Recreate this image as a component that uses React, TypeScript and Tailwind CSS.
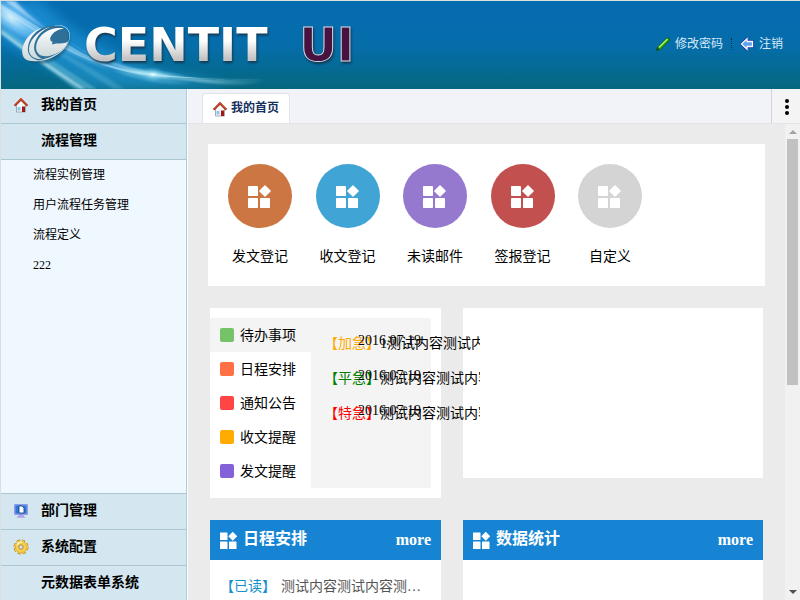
import type { ReactNode } from 'react';

const shortcuts = [
  { label: '发文登记', color: 'bg-[#cc7743]' },
  { label: '收文登记', color: 'bg-[#40a4d4]' },
  { label: '未读邮件', color: 'bg-[#9579cf]' },
  { label: '签报登记', color: 'bg-[#c2504f]' },
  { label: '自定义', color: 'bg-[#d4d4d4]' },
];

const categories = [
  { label: '待办事项', color: 'bg-[#76c269]', active: true },
  { label: '日程安排', color: 'bg-[#ff7145]', active: false },
  { label: '通知公告', color: 'bg-[#ff4644]', active: false },
  { label: '收文提醒', color: 'bg-[#ffab00]', active: false },
  { label: '发文提醒', color: 'bg-[#8561d9]', active: false },
];

const todos = [
  { tag: '【加急】', color: 'text-[#ffab00]', text: '1测试内容测试内容' },
  { tag: '【平急】', color: 'text-[#008000]', text: '测试内容测试内容' },
  { tag: '【特急】', color: 'text-[#ff0000]', text: '测试内容测试内容' },
];

function WidgetIcon({ className }: { className: string }) {
  return (
    <svg viewBox="1 0 24 24" className={className} fill="currentColor" aria-hidden="true">
      <rect x="1" y="2" width="10" height="10" rx="0.8" />
      <rect x="1" y="14" width="10" height="10" rx="0.8" />
      <rect x="13" y="14" width="10" height="10" rx="0.8" />
      <path d="M18 1l5.600 5.600a.6.6 0 0 1 0 .8L18 13l-5.600-5.600a.6.6 0 0 1 0-.8z" />
    </svg>
  );
}

function HomeIcon() {
  return (
    <svg viewBox="0 0 16 16" className="size-4 shrink-0" aria-hidden="true">
      <path d="M3.500 8L8 3.500 12.500 8v7h-9z" fill="#f6f6f6" stroke="#8f9aa2" strokeWidth=".8" />
      <path d="M1.600 8.800L8 2.200l6.400 6.600" fill="none" stroke="#a8341e" strokeWidth="2" />
      <path d="M2 7.800L8 1.800l6 6" fill="none" stroke="#e2492c" strokeWidth="1" />
      <rect x="9" y="9.500" width="3" height="5.500" fill="#a01818" />
      <rect x="4.500" y="10" width="3" height="3.500" fill="#8cc8f0" />
    </svg>
  );
}

function MonitorIcon() {
  return (
    <svg viewBox="0 0 16 16" className="size-4 shrink-0" aria-hidden="true">
      <rect x="1" y="1" width="14" height="11" rx="1" fill="#8f9be8" />
      <rect x="2.500" y="2.500" width="11" height="8" fill="#2a78d8" />
      <path d="M6 3h3l2 2v5H6z" fill="#fff" stroke="#123a78" strokeWidth=".8" />
      <path d="M6 12h4l2.500 2.800h-9z" fill="#a9a4e6" />
    </svg>
  );
}

function GearIcon() {
  return (
    <svg viewBox="0 0 16 16" className="size-4 shrink-0" aria-hidden="true">
      <circle cx="8" cy="8" r="6.200" fill="none" stroke="#a87a20" strokeWidth="2.600" strokeDasharray="3 1.870" />
      <circle cx="8" cy="8" r="5.800" fill="#f8cf48" stroke="#c79224" strokeWidth=".6" />
      <circle cx="8" cy="8" r="6.200" fill="none" stroke="#f6c83c" strokeWidth="1.600" strokeDasharray="2.600 2.270" />
      <path d="M4 6a5 5 0 0 1 5-3" fill="none" stroke="#fff3b8" strokeWidth="1.400" />
      <circle cx="8" cy="8" r="2.200" fill="#d4e7f0" stroke="#a8884a" strokeWidth="1" />
    </svg>
  );
}

function HeaderArt() {
  return (
    <svg viewBox="0 0 400 88" className="absolute left-0 top-0 h-full w-100" aria-hidden="true">
      <defs>
        <filter id="soft" x="-20%" y="-20%" width="140%" height="140%">
          <feGaussianBlur stdDeviation="1.200" />
        </filter>
        <filter id="softer" x="-20%" y="-20%" width="140%" height="140%">
          <feGaussianBlur stdDeviation="6" />
        </filter>
        <radialGradient id="glow">
          <stop offset="0" stopColor="#f0faff" />
          <stop offset=".35" stopColor="#7cc8fa" stopOpacity=".85" />
          <stop offset="1" stopColor="#2c96e6" stopOpacity="0" />
        </radialGradient>
        <linearGradient id="beam" gradientUnits="userSpaceOnUse" x1="0" y1="0" x2="270" y2="0">
          <stop offset="0" stopColor="#d8f0ff" stopOpacity=".9" />
          <stop offset=".3" stopColor="#6cbcf0" stopOpacity=".5" />
          <stop offset=".58" stopColor="#e4fbff" />
          <stop offset="1" stopColor="#7cd0e6" stopOpacity="0" />
        </linearGradient>
        <linearGradient id="silver" x1="0" y1="0" x2="0" y2="1">
          <stop offset="0" stopColor="#ffffff" />
          <stop offset="1" stopColor="#ccd8da" />
        </linearGradient>
        <radialGradient id="flare">
          <stop offset="0" stopColor="#ffffff" />
          <stop offset=".25" stopColor="#a8e4f6" stopOpacity=".8" />
          <stop offset="1" stopColor="#50b8dc" stopOpacity="0" />
        </radialGradient>
      </defs>
      <path d="M0 0H40Q84 46 160 70L230 84 150 88H90L0 40z" fill="#2aa4ea" opacity=".5" filter="url(#softer)" />
      <ellipse cx="10" cy="17" rx="50" ry="20" fill="url(#glow)" transform="rotate(35 10 17)" />
      <g filter="url(#soft)">
        <path d="M0 26Q40 52 96 88H74Q34 58 0 34z" fill="#6cc4de" opacity=".5" />
        <path d="M0 29Q36 56 84 88H80Q32 58 0 32z" fill="#d4f4fa" opacity=".6" />
        <path d="M0 18Q54 44 124 88H112Q48 46 0 22z" fill="#7ccbe8" opacity=".25" />
        <path d="M0 10Q50 38 96 62T190 82Q130 78 90 62T0 14z" fill="#8ad4f0" opacity=".35" />
      </g>
      <path d="M14 0Q62 52 150 72T270 78Q200 80 148 74T4 0z" fill="url(#beam)" opacity=".85" filter="url(#soft)" />
      <path d="M0 3Q50 34 80 51T150 73Q106 68 76 54T0 8z" fill="#d4f0ff" opacity=".4" />
      <path d="M60 44Q104 70 170 75T260 78Q200 79 150 74.500T60 44z" fill="url(#beam)" />
      <ellipse cx="152" cy="73.500" rx="44" ry="6" fill="url(#flare)" transform="rotate(7 152 73)" />
      <ellipse cx="152" cy="73.500" rx="12" ry="8" fill="url(#flare)" opacity=".7" />
      <ellipse cx="46.500" cy="44.500" rx="24.500" ry="16" transform="rotate(-30 46.500 44.500)" fill="#0c3c58" opacity=".5" filter="url(#soft)" />
      <ellipse cx="45" cy="42.500" rx="24" ry="15.500" transform="rotate(-30 45 42.500)" fill="#2f7098" />
      <g fill="url(#silver)">
        <path d="M41 27C28 31 20 43 21.500 53C22.500 60 30 61 38 59.500C30 58 26 53 27 46C28 38 33 31 41 27z" />
        <path d="M50 25.500C38 29 29 38 28 47C27.500 55 33 58.500 41 58C35 55 32 50 33.500 43C35.500 35 41 29 50 25.500z" />
        <path d="M63 27.500C50 25 38 33 35.500 43C33.500 52 39 56.500 48 55C58 53 65 47 67 40.500C64 42.500 60 42.500 55 42.500L51 43.500L51.500 40.500C50 41 48.500 39 49.500 36C52 31.500 56 28.500 63 27.500z" />
        <path d="M49 25.500C59 22 68.500 26 68.500 35C68.500 47 52 59 31 60C47 62 67 51 69 36C69.500 25 59 21.500 49 25.500z" />
      </g>
    </svg>
  );
}

function MenuHeading({ icon, children, edge }: { icon?: ReactNode; children: string; edge: string }) {
  return (
    <button
      type="button"
      className={`flex h-9 w-full shrink-0 items-center gap-3 bg-[#d4e7f0] pb-0.5 pl-3 text-left text-sm font-bold ${edge}`}
    >
      <span className="size-4">{icon}</span>
      {children}
    </button>
  );
}

function PanelHeader({ title }: { title: string }) {
  return (
    <div className="flex h-10 items-center gap-[5px] bg-[#1784d3] px-[10px] text-base font-bold text-white">
      <WidgetIcon className="size-[18px]" />
      <h2 className="flex-1 pb-0.5">{title}</h2>
      <a href="#more">more</a>
    </div>
  );
}

export default function App() {
  return (
    <div className="flex h-screen flex-col overflow-hidden border-t border-l border-[#dcdfe0] bg-[#ebebeb] font-['Liberation_Serif','Noto_Sans_CJK_SC',serif] text-black">
      <header className="relative flex h-22 shrink-0 items-center justify-between bg-linear-to-b from-[#056bb0] via-[#066dab] via-50% to-[#07677f] pr-[17px]">
        <HeaderArt />
        <h1 className="relative flex items-center gap-8 pl-[83px] font-['DejaVu_Sans',sans-serif] text-[46px] leading-none font-bold drop-shadow-[1px_2px_1px_#123a55]">
          <span className="bg-linear-to-b from-white from-40% to-[#c4c4c4] to-80% bg-clip-text text-transparent">CENTIT</span>
          <span className="text-[#47123f] [-webkit-text-stroke:1px_#d5dde2]">UI</span>
        </h1>
        <nav className="relative flex items-center pb-0.5 text-xs text-[#d5eaf7]">
          <a href="#password" className="flex items-center gap-[5px]">
            <svg viewBox="0 0 14 14" className="size-[14px]" aria-hidden="true">
              <path d="M.5 13.500l1-3.500L10.500 1.200q1.500-1 2.600.2t0 2.600L4.500 12.500z" fill="#1c9a10" stroke="#0c5014" strokeWidth=".6" />
              <path d="M3 10.500L11.500 2" stroke="#b8f070" strokeWidth="1.600" />
              <path d="M.5 13.500l.7-2.500 1.900 1.600z" fill="#143c10" />
            </svg>
            修改密码
          </a>
          <span className="mx-2 h-3 border-l border-dotted border-[#0c3350]" />
          <a href="#logout" className="flex items-center gap-[5px]">
            <svg viewBox="0 0 14 14" className="size-[14px]" aria-hidden="true">
              <path d="M1 7l6-5.800V4h6v6H7v2.800z" fill="#5aa2ee" stroke="#1530a0" strokeWidth="1.800" strokeLinejoin="round" />
              <path d="M1.500 7L7 1.800V4.500h5.500v5H7v2.700z" fill="none" stroke="#fff" strokeWidth="1.300" />
            </svg>
            注销
          </a>
        </nav>
      </header>

      <div className="flex min-h-0 flex-1">
        <aside className="flex w-[186px] shrink-0 flex-col border-r border-[#a9cfd8] bg-[#f0f8ff]">
          <MenuHeading icon={<HomeIcon />} edge="-mt-px border-b border-[#abc8d1]">我的首页</MenuHeading>
          <MenuHeading edge="border-b border-[#abc8d1]">流程管理</MenuHeading>
          <ul className="flex-1 text-xs leading-[30px]">
            {['流程实例管理', '用户流程任务管理', '流程定义', '222'].map((item) => (
              <li key={item} className="pl-8">
                <a href="#menu">{item}</a>
              </li>
            ))}
          </ul>
          <MenuHeading icon={<MonitorIcon />} edge="border-t border-[#abc8d1]">部门管理</MenuHeading>
          <MenuHeading icon={<GearIcon />} edge="border-t border-[#abc8d1]">系统配置</MenuHeading>
          <MenuHeading edge="-mb-px border-t border-[#abc8d1]">元数据表单系统</MenuHeading>
        </aside>

        <div className="flex min-w-0 flex-1 flex-col border-l border-white">
          <div className="flex h-[35px] shrink-0 items-end border-b border-[#e1e2ea] bg-[#f2f3f9] pl-[14px]">
            <button
              type="button"
              className="flex h-[30px] items-center gap-[3px] rounded-t border border-b-0 border-[#e1e2ea] bg-white px-[9px] text-xs font-bold text-[#16305f]"
            >
              <HomeIcon />
              <span className="pr-px pb-0.5">我的首页</span>
            </button>
            <button
              type="button"
              aria-label="更多"
              className="ml-auto flex h-full w-[29px] flex-col items-center justify-center gap-[2px] border-l border-[#d3d3d3] bg-[#f4f4f4] pt-0.5 pl-0.5"
            >
              <span className="size-1 rounded-full bg-black" />
              <span className="size-1 rounded-full bg-black" />
              <span className="size-1 rounded-full bg-black" />
            </button>
          </div>

          <div className="flex min-h-0 flex-1">
            <main className="min-w-0 flex-1 overflow-hidden pt-5 text-sm">
              <section className="mx-5 h-[142px] bg-white p-5 whitespace-nowrap">
                {shortcuts.map((s) => (
                  <span key={s.label}>
                    <a href="#open" className="mr-5 inline-block w-16 text-center">
                      <span className={`flex size-16 items-center justify-center rounded-full text-white ${s.color}`}>
                        <WidgetIcon className="size-6" />
                      </span>
                      <span className="mt-[19px] block">{s.label}</span>
                    </a>{' '}
                  </span>
                ))}
              </section>

              <div className="mx-[22px] mt-[22px] grid grid-cols-[minmax(0,1fr)_300px] items-start gap-[22px]">
                <section className="relative flex bg-white py-[10px] pr-[10px]">
                  <ul className="w-[101px] shrink-0">
                    {categories.map((c) => (
                      <li key={c.label}>
                        <button
                          type="button"
                          className={`flex h-[34px] w-full items-center gap-[6px] pl-[10px] whitespace-nowrap ${c.active ? 'bg-[#f4f4f4]' : 'bg-white'}`}
                        >
                          <span className={`size-[14px] rounded-xs ${c.color}`} />
                          <span className="pt-0.5">{c.label}</span>
                        </button>
                      </li>
                    ))}
                  </ul>
                  <ul className="min-w-0 flex-1 bg-[#f4f4f4] px-[10px] py-2 leading-[35px]">
                    {todos.map((t) => (
                      <li key={t.tag} className="relative h-[35px] pl-[3px]">
                        <p className="w-[156px] overflow-hidden whitespace-nowrap">
                          <span className={t.color}>{t.tag}</span>
                          {t.text}
                        </p>
                        <time className="absolute -top-[3px] right-0">2016.07.19</time>
                      </li>
                    ))}
                  </ul>
                </section>
                <section className="h-[170px] bg-white" />

                <section className="h-[190px] bg-white">
                  <PanelHeader title="日程安排" />
                  <p className="flex px-[10px] pt-[17px] text-[#555555]">
                    <span className="mr-[5px] text-[#1590c8]">【已读】</span>
                    <span className="w-[140px] truncate">测试内容测试内容测试内容</span>
                  </p>
                </section>
                <section className="h-[190px] bg-white">
                  <PanelHeader title="数据统计" />
                </section>
              </div>
            </main>

            <div className="flex w-[15px] shrink-0 flex-col items-center bg-[#f1f1f1] py-[6px]" aria-hidden="true">
              <span className="border-x-4 border-b-4 border-x-transparent border-b-[#a3a3a3]" />
              <span className="mt-[5px] mb-auto h-[246px] w-[11px] bg-[#c1c1c1]" />
              <span className="border-x-4 border-t-4 border-x-transparent border-t-[#505050]" />
            </div>
          </div>
        </div>
      </div>
    </div>
  );
}
